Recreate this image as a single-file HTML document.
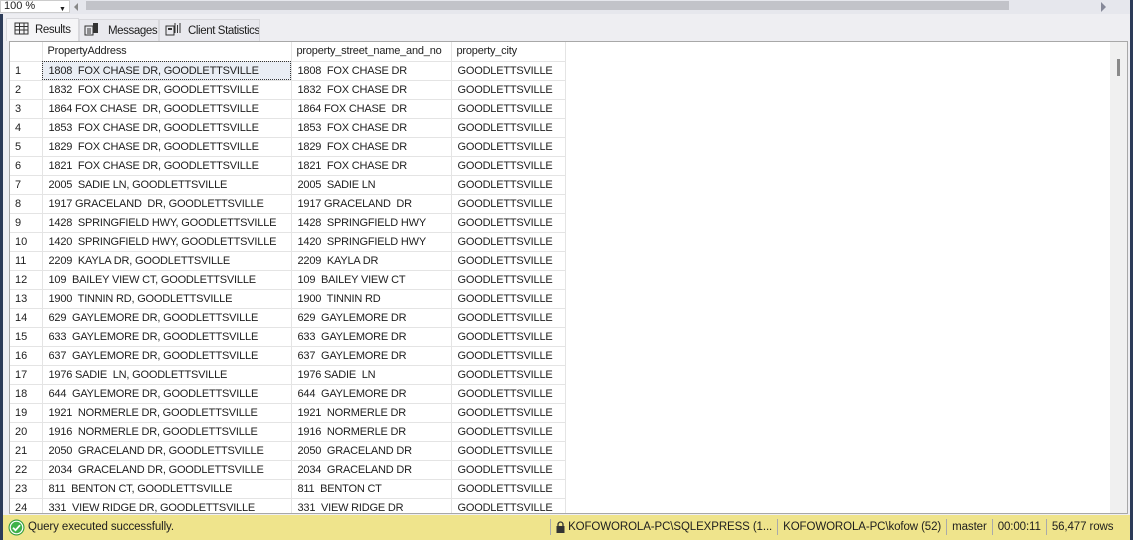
<!DOCTYPE html><html><head><style>
*{margin:0;padding:0;box-sizing:border-box}
body{width:1133px;height:540px;overflow:hidden;background:#eeeef2;font-family:"Liberation Sans",sans-serif;font-size:11px;color:#1e1e1e;position:relative}
.abs{position:absolute}
#top{left:0;top:0;width:1133px;height:14px;background:#e6e7ed}
#zoom{left:0;top:0;width:70px;height:13px;background:#fff;border:1px solid #ccc;font-size:11px;line-height:11px;padding-left:3px}
#lb{left:0;top:14px;width:3px;height:526px;background:#2c3b58}
#rb{left:1130px;top:0;width:3px;height:540px;background:#2c3b58}
.tab{top:19px;height:22px;line-height:22px;padding-left:28px;font-size:11.5px;background:#e9e9ee;border:1px solid #d8d8dc;border-bottom:none;white-space:nowrap;overflow:hidden;letter-spacing:-0.4px}
#grid{left:9px;top:41px;width:1119px;height:473px;background:#fff;border:1px solid #a8a8a8;overflow:hidden}
table{border-collapse:collapse;position:absolute;left:0;top:0;table-layout:fixed;width:555px}
td{height:19px;border-right:1px solid #e4e4e4;border-bottom:1px solid #e4e4e4;white-space:nowrap;overflow:hidden;padding-left:6px;font-size:11px;letter-spacing:-0.2px;line-height:18px}
td.n{padding-left:5px;letter-spacing:0}
tr.h td{padding-left:5px}
#vs{left:1100px;top:0;width:17px;height:471px;background:#f0f0f0}
#st{left:3px;top:515px;width:1127px;height:25px;background:#efe48c;font-size:11.5px;line-height:25px;white-space:nowrap;letter-spacing:-0.1px}
.sep{display:inline-block;width:1px;height:16px;background:#aaa;vertical-align:middle;margin:0 5px}
</style></head><body>
<div id="top" class="abs"></div>
<div id="zoom" class="abs">100 %<span style="position:absolute;left:58px;top:3px;font-size:7px">▼</span></div>
<div class="abs" style="left:74px;top:3px;width:0;height:0;border-top:4px solid transparent;border-bottom:4px solid transparent;border-right:4px solid #888"></div>
<div class="abs" style="left:86px;top:1px;width:923px;height:9px;background:#c2c3c9"></div>
<div class="abs" style="left:1101px;top:2px;width:0;height:0;border-top:5px solid transparent;border-bottom:5px solid transparent;border-left:5px solid #868999"></div>
<div id="lb" class="abs"></div><div id="rb" class="abs"></div>
<div class="tab abs" style="left:6px;width:73px;background:#f5f5f7;top:18px;height:23px">Results</div>
<div class="tab abs" style="left:79px;width:80px">Messages</div>
<div class="tab abs" style="left:159px;width:101px">Client Statistics</div>
<svg class="abs" style="left:14px;top:22px" width="16" height="14"><rect x="1" y="1" width="13" height="11" fill="none" stroke="#333"/><path d="M1 4.5H14M1 8H14M5.5 1V12M10 1V12" stroke="#333"/></svg>
<svg class="abs" style="left:84px;top:22px" width="16" height="14"><rect x="1" y="4" width="8" height="9" fill="none" stroke="#333"/><path d="M3 7h4M3 9h4M3 11h4" stroke="#333"/><rect x="9" y="1" width="5" height="10" fill="#333"/></svg>
<svg class="abs" style="left:165px;top:22px" width="16" height="14"><rect x="1" y="4" width="8" height="9" fill="none" stroke="#333"/><rect x="3" y="6" width="4" height="2" fill="#333"/><path d="M10 1v10M12.5 3v8M15 1v10" stroke="#333"/></svg>
<div id="grid" class="abs">
<table>
<colgroup><col style="width:32px"><col style="width:249px"><col style="width:160px"><col style="width:114px"></colgroup>
<tr class="h"><td class="n"></td><td>PropertyAddress</td><td>property_street_name_and_no</td><td>property_city</td></tr>
<tr><td class="n">1</td><td style="outline:1px dotted #333;outline-offset:-1px;background:#eaeef4">1808&nbsp; FOX CHASE DR, GOODLETTSVILLE</td><td>1808&nbsp; FOX CHASE DR</td><td>GOODLETTSVILLE</td></tr>
<tr><td class="n">2</td><td>1832&nbsp; FOX CHASE DR, GOODLETTSVILLE</td><td>1832&nbsp; FOX CHASE DR</td><td>GOODLETTSVILLE</td></tr>
<tr><td class="n">3</td><td>1864 FOX CHASE&nbsp; DR, GOODLETTSVILLE</td><td>1864 FOX CHASE&nbsp; DR</td><td>GOODLETTSVILLE</td></tr>
<tr><td class="n">4</td><td>1853&nbsp; FOX CHASE DR, GOODLETTSVILLE</td><td>1853&nbsp; FOX CHASE DR</td><td>GOODLETTSVILLE</td></tr>
<tr><td class="n">5</td><td>1829&nbsp; FOX CHASE DR, GOODLETTSVILLE</td><td>1829&nbsp; FOX CHASE DR</td><td>GOODLETTSVILLE</td></tr>
<tr><td class="n">6</td><td>1821&nbsp; FOX CHASE DR, GOODLETTSVILLE</td><td>1821&nbsp; FOX CHASE DR</td><td>GOODLETTSVILLE</td></tr>
<tr><td class="n">7</td><td>2005&nbsp; SADIE LN, GOODLETTSVILLE</td><td>2005&nbsp; SADIE LN</td><td>GOODLETTSVILLE</td></tr>
<tr><td class="n">8</td><td>1917 GRACELAND&nbsp; DR, GOODLETTSVILLE</td><td>1917 GRACELAND&nbsp; DR</td><td>GOODLETTSVILLE</td></tr>
<tr><td class="n">9</td><td>1428&nbsp; SPRINGFIELD HWY, GOODLETTSVILLE</td><td>1428&nbsp; SPRINGFIELD HWY</td><td>GOODLETTSVILLE</td></tr>
<tr><td class="n">10</td><td>1420&nbsp; SPRINGFIELD HWY, GOODLETTSVILLE</td><td>1420&nbsp; SPRINGFIELD HWY</td><td>GOODLETTSVILLE</td></tr>
<tr><td class="n">11</td><td>2209&nbsp; KAYLA DR, GOODLETTSVILLE</td><td>2209&nbsp; KAYLA DR</td><td>GOODLETTSVILLE</td></tr>
<tr><td class="n">12</td><td>109&nbsp; BAILEY VIEW CT, GOODLETTSVILLE</td><td>109&nbsp; BAILEY VIEW CT</td><td>GOODLETTSVILLE</td></tr>
<tr><td class="n">13</td><td>1900&nbsp; TINNIN RD, GOODLETTSVILLE</td><td>1900&nbsp; TINNIN RD</td><td>GOODLETTSVILLE</td></tr>
<tr><td class="n">14</td><td>629&nbsp; GAYLEMORE DR, GOODLETTSVILLE</td><td>629&nbsp; GAYLEMORE DR</td><td>GOODLETTSVILLE</td></tr>
<tr><td class="n">15</td><td>633&nbsp; GAYLEMORE DR, GOODLETTSVILLE</td><td>633&nbsp; GAYLEMORE DR</td><td>GOODLETTSVILLE</td></tr>
<tr><td class="n">16</td><td>637&nbsp; GAYLEMORE DR, GOODLETTSVILLE</td><td>637&nbsp; GAYLEMORE DR</td><td>GOODLETTSVILLE</td></tr>
<tr><td class="n">17</td><td>1976 SADIE&nbsp; LN, GOODLETTSVILLE</td><td>1976 SADIE&nbsp; LN</td><td>GOODLETTSVILLE</td></tr>
<tr><td class="n">18</td><td>644&nbsp; GAYLEMORE DR, GOODLETTSVILLE</td><td>644&nbsp; GAYLEMORE DR</td><td>GOODLETTSVILLE</td></tr>
<tr><td class="n">19</td><td>1921&nbsp; NORMERLE DR, GOODLETTSVILLE</td><td>1921&nbsp; NORMERLE DR</td><td>GOODLETTSVILLE</td></tr>
<tr><td class="n">20</td><td>1916&nbsp; NORMERLE DR, GOODLETTSVILLE</td><td>1916&nbsp; NORMERLE DR</td><td>GOODLETTSVILLE</td></tr>
<tr><td class="n">21</td><td>2050&nbsp; GRACELAND DR, GOODLETTSVILLE</td><td>2050&nbsp; GRACELAND DR</td><td>GOODLETTSVILLE</td></tr>
<tr><td class="n">22</td><td>2034&nbsp; GRACELAND DR, GOODLETTSVILLE</td><td>2034&nbsp; GRACELAND DR</td><td>GOODLETTSVILLE</td></tr>
<tr><td class="n">23</td><td>811&nbsp; BENTON CT, GOODLETTSVILLE</td><td>811&nbsp; BENTON CT</td><td>GOODLETTSVILLE</td></tr>
<tr><td class="n">24</td><td>331&nbsp; VIEW RIDGE DR, GOODLETTSVILLE</td><td>331&nbsp; VIEW RIDGE DR</td><td>GOODLETTSVILLE</td></tr>
</table>
<div id="vs" class="abs"><div class="abs" style="left:7px;top:17px;width:3px;height:17px;background:#8a8a8a"></div></div>
</div>
<div id="st" class="abs">
<svg class="abs" style="left:5px;top:4px" width="17" height="17"><circle cx="8.5" cy="8.5" r="8" fill="#2f9a3a"/><circle cx="8.5" cy="8.5" r="6.3" fill="#3fb24a" stroke="#fff" stroke-width="1.2"/><path d="M5 8.7l2.5 2.5 4.5-5" stroke="#fff" stroke-width="1.8" fill="none"/></svg>
<span class="abs" style="left:25px;top:0">Query executed successfully.</span>
<span class="abs" style="left:542px;top:0"><span class="sep"></span><svg width="9" height="12" style="vertical-align:middle"><path d="M2 5V3.5a2.5 2.5 0 015 0V5" stroke="#333" fill="none" stroke-width="1.3"/><rect x="0.5" y="5" width="8" height="7" fill="#333"/></svg> KOFOWOROLA-PC\SQLEXPRESS (1...<span class="sep"></span>KOFOWOROLA-PC\kofow (52)<span class="sep"></span>master<span class="sep"></span>00:00:11<span class="sep"></span>56,477 rows</span>
</div>
</body></html>
